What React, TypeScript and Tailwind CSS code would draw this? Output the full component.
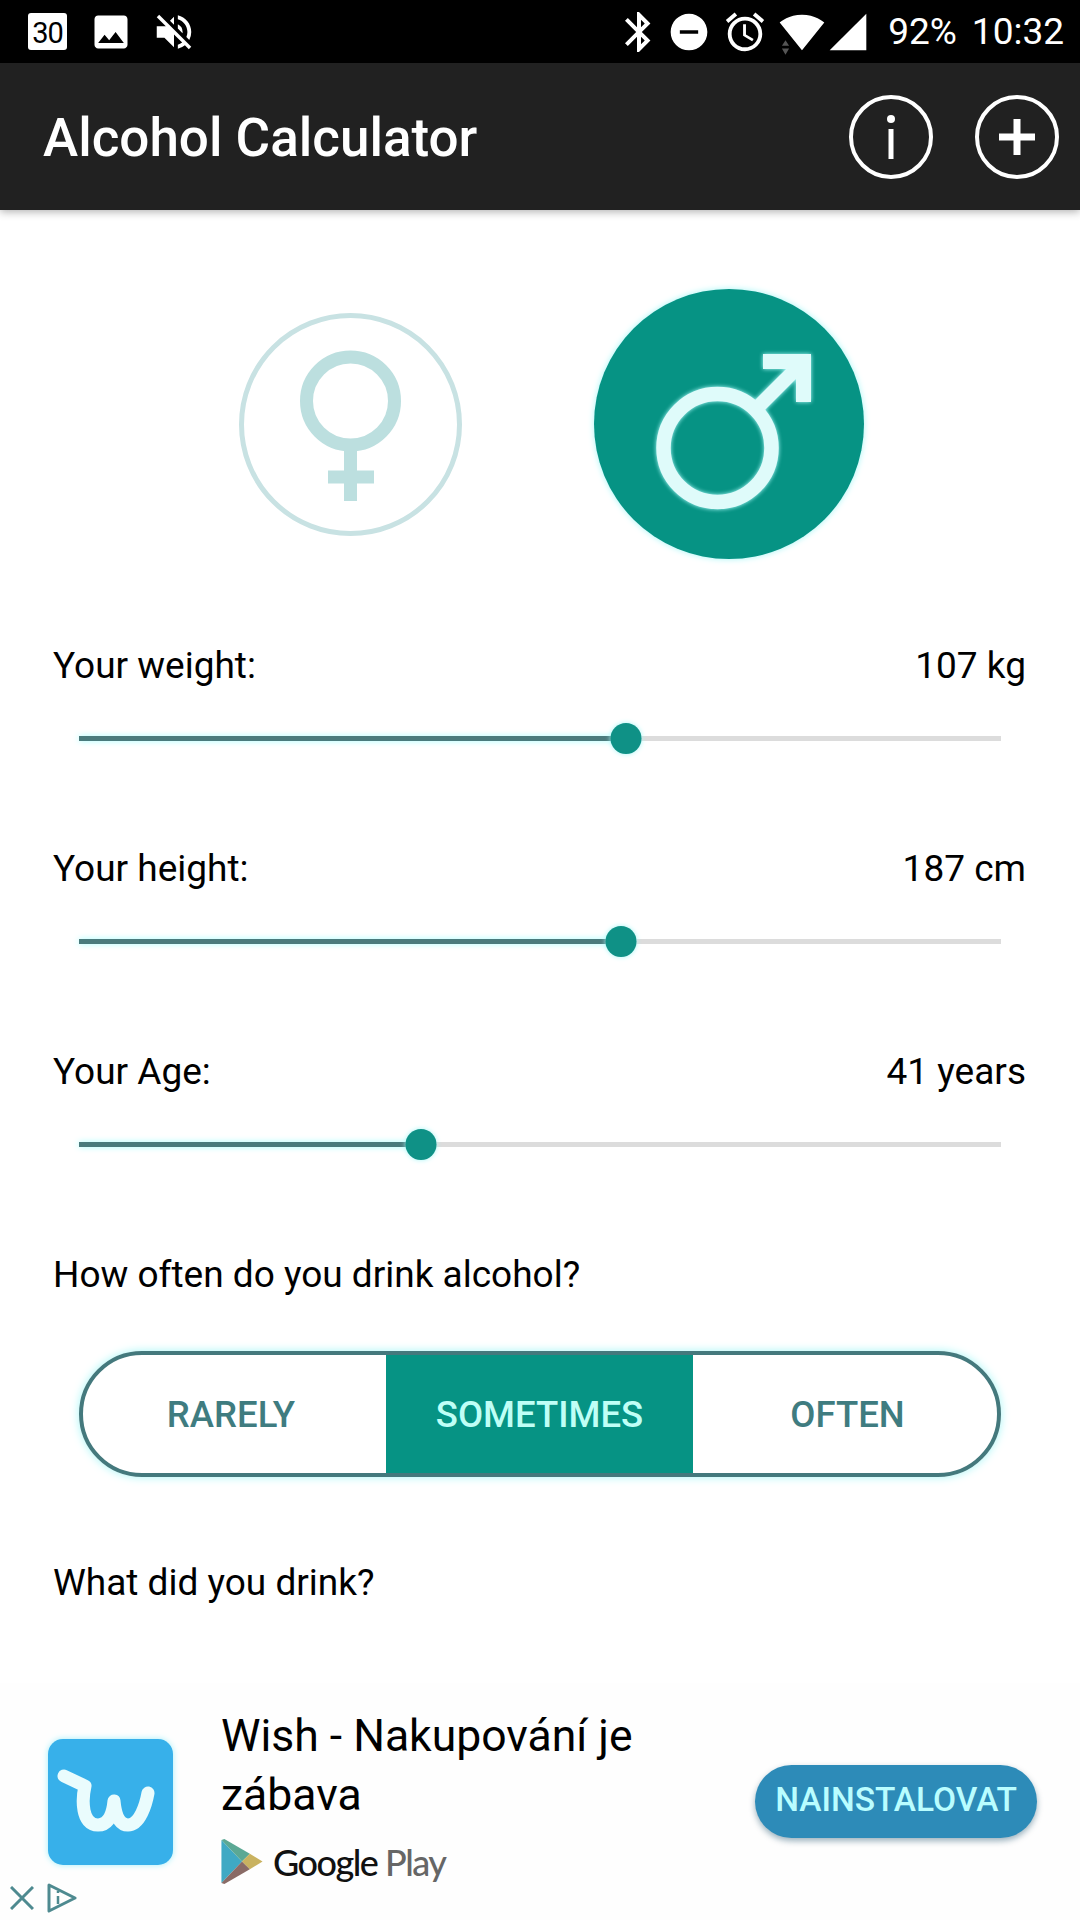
import { MdAlarm, MdBluetooth, MdDoNotDisturbOn, MdImage, MdSignalCellular4Bar, MdSignalWifi4Bar, MdVolumeOff } from 'react-icons/md';

function StatusBar() {
  return (
    <div className="flex h-[63px] shrink-0 items-center bg-black pr-[16px] pl-[28px] text-white">
      {/* Calendar */}
      <div className="relative flex h-[37px] w-[39px] items-center justify-center rounded-[3px] bg-white">
        <span className="mt-[4px] text-[29px] leading-none tracking-[-1px] text-black">30</span>
      </div>
      <MdImage size={44} className="ml-[22px]" />
      <MdVolumeOff size={46} className="ml-[18px]" />
      <MdBluetooth size={48} className="ml-auto" />
      <MdDoNotDisturbOn size={44} className="ml-[4px]" />
      <MdAlarm size={46} className="ml-[11px]" />
      <div className="relative ml-[11px]">
        <MdSignalWifi4Bar size={46} />
        <svg viewBox="0 0 10 18" className="absolute top-[30px] left-[2px] h-[17px] w-[9px]">
          <path d="M5 1 9 7H1zM1 10h8l-4 7z" fill="#555" />
        </svg>
      </div>
      <MdSignalCellular4Bar size={44} className="ml-[1px]" />
      <span className="ml-[18px] text-[37px] leading-none">92%</span>
      <span className="ml-[15px] text-[37px] leading-none">10:32</span>
    </div>
  );
}

function AppBar() {
  return (
    <div className="relative z-10 flex h-[147px] shrink-0 items-center bg-[#212121] pr-[21px] pl-[43px] shadow-[0_2px_8px_rgba(0,0,0,0.3)]">
      <h1 className="pt-[4px] text-[53px] leading-none font-medium text-white">Alcohol Calculator</h1>
      <div className="ml-auto flex gap-[42px]">
        <div className="flex h-[84px] w-[84px] items-center justify-center rounded-full border-[4px] border-white">
          <svg viewBox="0 0 10 44" className="h-[44px] w-[10px]">
            <circle cx="5" cy="4" r="4" fill="#fff" />
            <rect x="2.5" y="14" width="5" height="30" fill="#fff" />
          </svg>
        </div>
        <div className="flex h-[84px] w-[84px] items-center justify-center rounded-full border-[4px] border-white">
          <svg viewBox="0 0 36 36" className="h-[36px] w-[36px]">
            <path d="M14.5 0h7v14.5H36v7H21.5V36h-7V21.5H0v-7h14.5z" fill="#fff" />
          </svg>
        </div>
      </div>
    </div>
  );
}

function GenderPicker() {
  return (
    <div className="flex items-center gap-[132px] pt-[79px] pl-[239px]">
      <div className="h-[223px] w-[223px] rounded-full border-[5px] border-[#c8e2e3]">
        <svg viewBox="0 0 223 223" className="-m-[5px] h-[223px] w-[223px]">
          <circle cx="111.5" cy="88" r="44" fill="none" stroke="#bcdfdf" strokeWidth="13" />
          <path d="M111.5 130v58M89 164h46" fill="none" stroke="#bcdfdf" strokeWidth="13" />
        </svg>
      </div>
      <div className="h-[270px] w-[270px] rounded-full bg-[#069384] shadow-[0_0_6px_#a5f6f6]">
        <svg viewBox="0 0 270 270" className="h-[270px] w-[270px] drop-shadow-[0_0_2px_#b5ffff]">
          <circle cx="123.5" cy="159" r="54" fill="none" stroke="#dffbfa" strokeWidth="14.5" />
          <path d="M160 122 205 77" fill="none" stroke="#dffbfa" strokeWidth="14" />
          <path d="M169 65h48v48h-15V80h-33z" fill="#dffbfa" />
        </svg>
      </div>
    </div>
  );
}

function SliderRow({ label, value, thumbLeft, className }: { label: string; value: string; thumbLeft: number; className: string }) {
  return (
    <div className={className}>
      <div className="flex justify-between pr-[54px] pl-[53px] text-[37px] leading-[42px] text-black">
        <span>{label}</span>
        <span>{value}</span>
      </div>
      <div className="relative mx-[79px] mt-[36px] flex h-[30px] items-center">
        <div className="h-[5px] w-full bg-[#dcdcdc]" />
        <div
          className="absolute left-0 h-[5px] bg-[#4a7b7d] shadow-[0_0_6px_#a5ffff]"
          style={{ width: thumbLeft }}
        />
        <div
          className="absolute h-[31px] w-[31px] -translate-x-1/2 rounded-full bg-[#0f9186] shadow-[0_0_5px_#a5f6f6]"
          style={{ left: thumbLeft }}
        />
      </div>
    </div>
  );
}

function FrequencyToggle() {
  return (
    <div className="mx-[79px] mt-[55px] flex h-[126px] overflow-hidden rounded-[63px] border-[4px] border-[#44797d] shadow-[0_0_10px_#a5f6f6]">
      <div className="flex w-[303px] items-center justify-center pt-[2px] pr-[7px] text-[36.5px] font-medium text-[#3f7c80]">RARELY</div>
      <div className="flex w-[307px] items-center justify-center bg-[#069384] pt-[2px] text-[36.5px] font-medium text-[#bffff6]">SOMETIMES</div>
      <div className="flex flex-1 items-center justify-center pt-[2px] pl-[5px] text-[36.5px] font-medium text-[#3f7c80]">OFTEN</div>
    </div>
  );
}

function PlayLogo() {
  return (
    <svg viewBox="0 0 42 46" className="h-[45px] w-[42px]">
      <path d="M0 1v44l21-22z" fill="#3fa9c4" />
      <path d="M0 1 21 23l8-8L3 0z" fill="#5ba894" />
      <path d="M29 15 21 23l8 8 13-8z" fill="#c9b260" />
      <path d="M0 45 21 23l8 8L3 46z" fill="#8a6b66" />
    </svg>
  );
}

function AdBanner() {
  return (
    <div className="relative mt-auto flex h-[237px] shrink-0 items-center bg-[#fefefe] pr-[43px] pl-[48px]">
      <div className="flex h-[126px] w-[125px] items-center justify-center rounded-[15px] bg-[#37b0ea] shadow-[0_0_6px_#a5f0fa]">
        <svg viewBox="0 0 125 126" className="h-[126px] w-[125px]">
          <path
            d="M16 37 37 47C34 60 33 86 50 86 62 86 65 72 66 62 67 72 70 86 80 86 92 86 98 65 100 54"
            fill="none"
            stroke="#eafcfd"
            strokeWidth="13"
            strokeLinecap="round"
            strokeLinejoin="round"
          />
        </svg>
      </div>
      <div className="ml-[48px] self-start pt-[24px]">
        <div className="w-[430px] text-[44.5px] leading-[59px] text-black">Wish - Nakupování je zábava</div>
        <div className="mt-[14px] flex items-center gap-[10px]">
          <PlayLogo />
          <span className="font-['Lato',sans-serif] text-[36px] leading-none font-medium tracking-[-1.5px] text-[#111]">
            Google <span className="text-[#666]">Play</span>
          </span>
        </div>
      </div>
      <div className="ml-auto flex h-[73px] w-[282px] items-center justify-center rounded-[37px] bg-[#2d8bb8] pb-[2px] text-[33.5px] font-medium text-[#b9fdff] shadow-[0_3px_6px_rgba(0,60,90,0.4)]">
        NAINSTALOVAT
      </div>
      <svg viewBox="0 0 24 24" className="absolute bottom-[10px] left-[10px] h-[24px] w-[24px]">
        <path d="M1 1 23 23M23 1 1 23" fill="none" stroke="#4e8a90" strokeWidth="3" />
      </svg>
      <svg viewBox="0 0 30 30" className="absolute bottom-[7px] left-[47px] h-[30px] w-[30px]">
        <path d="M2 2 28 15 2 28z" fill="none" stroke="#4e8a90" strokeWidth="3" strokeLinejoin="round" />
        <path d="M11 13v8M11 8v2" fill="none" stroke="#4e8a90" strokeWidth="2.5" />
      </svg>
    </div>
  );
}

export default function App() {
  return (
    <div className="flex h-[1920px] w-[1080px] flex-col overflow-hidden bg-white font-['Roboto',sans-serif]">
      <StatusBar />
      <AppBar />
      <GenderPicker />
      <SliderRow className="mt-[86px]" label="Your weight:" value="107 kg" thumbLeft={547} />
      <SliderRow className="mt-[95px]" label="Your height:" value="187 cm" thumbLeft={542} />
      <SliderRow className="mt-[95px]" label="Your Age:" value="41 years" thumbLeft={342} />
      <div className="mt-[95px] pl-[53px] text-[37px] leading-[42px] text-black">How often do you drink alcohol?</div>
      <FrequencyToggle />
      <div className="mt-[85px] pl-[53px] text-[37px] leading-[42px] text-black">What did you drink?</div>
      <AdBanner />
    </div>
  );
}
